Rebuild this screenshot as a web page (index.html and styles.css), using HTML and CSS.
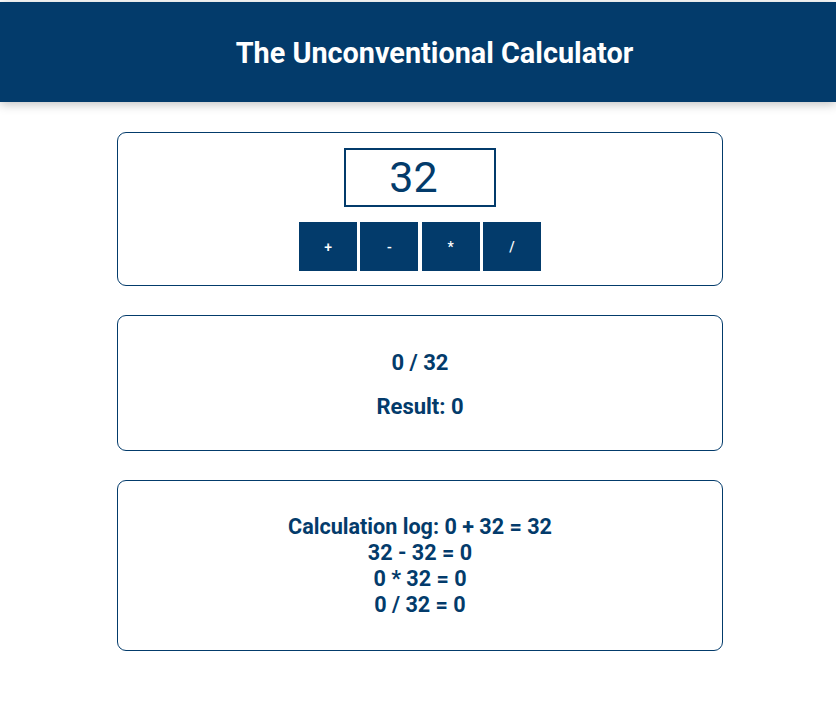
FILE: index.html
```html
<!DOCTYPE html>
<html lang="en">
<head>
<meta charset="utf-8">
<title>The Unconventional Calculator</title>
<link rel="stylesheet" href="styles.css">
</head>
<body>
<header class="app-header">
  <h1 class="app-title">The Unconventional Calculator</h1>
</header>
<main class="app-main">
  <section class="card input-card">
    <div class="number-input">32</div>
    <div class="ops">
      <button class="op-btn">+</button>
      <button class="op-btn">-</button>
      <button class="op-btn">*</button>
      <button class="op-btn">/</button>
    </div>
  </section>
  <section class="card result-card">
    <p class="calc-line">0 / 32</p>
    <p class="calc-line">Result: 0</p>
  </section>
  <section class="card log-card">
    <p class="log-line">Calculation log: 0 + 32 = 32</p>
    <p class="log-line">32 - 32 = 0</p>
    <p class="log-line">0 * 32 = 0</p>
    <p class="log-line">0 / 32 = 0</p>
  </section>
</main>
</body>
</html>
```
FILE: styles.css
```css
* { box-sizing: border-box; }
html, body {
  margin: 0;
  padding: 0;
  background: #ffffff;
  font-family: Roboto, "Liberation Sans", sans-serif;
  color: #033b6b;
}
body { padding-top: 2px; }
.app-header {
  height: 100px;
  background: #033b6b;
  box-shadow: 0 2px 10px rgba(0, 0, 0, 0.26);
  display: flex;
  align-items: center;
  justify-content: center;
  padding-left: 33px;
  padding-top: 2px;
}
.app-title {
  margin: 0;
  color: #ffffff;
  font-size: 28.8px;
  font-weight: 700;
}
.app-main {
  display: flex;
  flex-direction: column;
  align-items: center;
  gap: 29px;
  padding-top: 30px;
}
.card {
  width: 606px;
  margin-left: 4px;
  border: 1px solid #033b6b;
  border-radius: 9px;
  display: flex;
  flex-direction: column;
  align-items: center;
}
.input-card {
  padding: 15px 0 14px;
  gap: 15px;
}
.number-input {
  width: 152px;
  height: 59px;
  border: 2px solid #033b6b;
  font-size: 43px;
  line-height: 55px;
  text-align: center;
  padding-right: 13px;
  color: #033b6b;
}
.ops {
  display: flex;
  gap: 3.3px;
}
.op-btn {
  width: 58px;
  height: 49px;
  border: none;
  margin: 0;
  background: #033b6b;
  color: #ffffff;
  font-family: Roboto, "Liberation Sans", sans-serif;
  font-size: 14px;
  font-weight: 500;
  padding: 0;
}
.result-card {
  padding: 35px 0 31px;
  gap: 20px;
}
.calc-line {
  margin: 0;
  font-size: 22px;
  line-height: 24px;
  font-weight: 700;
}
.log-card {
  padding: 33px 0 32px;
}
.log-line {
  margin: 0;
  font-size: 21.6px;
  line-height: 26px;
  font-weight: 700;
}
```
